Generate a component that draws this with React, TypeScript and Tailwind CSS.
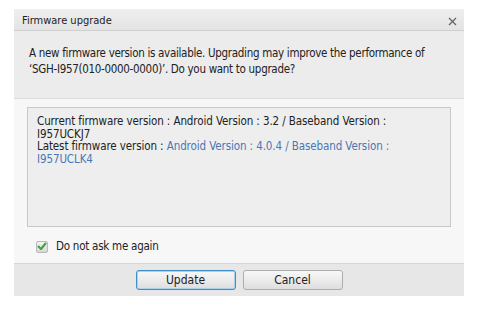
import React from "react";

export default function App() {
  const font = { fontFamily: '"DejaVu Sans Condensed", "DejaVu Sans", Verdana, sans-serif' };
  return (
    <div className="w-[479px] h-[311px] bg-white pt-[9px] pl-[14px]" style={font}>
      <div className="w-[450px] h-[287px] flex flex-col bg-[#f7f7f7]">
        <div className="h-[22px] flex items-center justify-between pl-[8px] pr-[7px] pt-[3px] bg-gradient-to-b from-[#eeeeee] to-[#e4e4e4] border-b border-[#cfcfcf]">
          <span className="text-[11px] text-[#222] whitespace-nowrap">Firmware upgrade</span>
          <svg width="9" height="9" viewBox="0 0 9 9">
            <path d="M1 1L8 8M8 1L1 8" stroke="#666" strokeWidth="1.3" />
          </svg>
        </div>
        <div className="h-[68px] bg-[#ececec] border-b border-[#dcdcdc] pl-[15px] pt-[14px] text-[11.5px] leading-[16px] tracking-[-0.3px] text-[#222] whitespace-nowrap">
          <div>A new firmware version is available. Upgrading may improve the performance of</div>
          <div>‘SGH-I957(010-0000-0000)’. Do you want to upgrade?</div>
        </div>
        <div className="flex-1 flex flex-col px-[13px] pt-[8px]">
          <div className="h-[120px] border border-[#c8c8c8] bg-[#eeeeee] pl-[9px] pt-[7px] text-[11.5px] leading-[12.5px] tracking-[-0.1px] text-[#222] whitespace-nowrap">
            <div>Current firmware version : Android Version : 3.2 / Baseband Version :</div>
            <div>I957UCKJ7</div>
            <div>
              Latest firmware version : <span className="text-[#4a77b4]">Android Version : 4.0.4 / Baseband Version :</span>
            </div>
            <div className="text-[#4a77b4]">I957UCLK4</div>
          </div>
          <div className="flex items-center gap-[8px] pl-[9px] mt-[11px]">
            <div className="w-[12px] h-[12px] rounded-[2px] border border-[#b8b8b8] bg-gradient-to-b from-[#f2f2f2] to-[#d8d8d8] flex items-center justify-center">
              <svg width="10" height="9" viewBox="0 0 10 9">
                <path d="M1.5 4.5L4 7L8.5 1.5" stroke="#3aa53a" strokeWidth="2" fill="none" strokeLinecap="round" strokeLinejoin="round" />
              </svg>
            </div>
            <span className="text-[11.5px] tracking-[-0.25px] text-[#222] whitespace-nowrap">Do not ask me again</span>
          </div>
        </div>
        <div className="h-[33px] border-t border-[#d6d6d6] bg-[#e7e7e7] flex justify-center items-start pt-[6px] gap-[7px]">
          <button className="w-[100px] h-[20px] rounded-[3px] border border-[#3d8fc9] bg-gradient-to-b from-[#f8f8f8] to-[#dedede] text-[12px] text-[#222] leading-none shadow-[inset_0_0_0_1px_#a9d2ee]">
            Update
          </button>
          <button className="w-[100px] h-[20px] rounded-[3px] border border-[#adadad] bg-gradient-to-b from-[#f8f8f8] to-[#dedede] text-[12px] text-[#222] leading-none">
            Cancel
          </button>
        </div>
      </div>
    </div>
  );
}
